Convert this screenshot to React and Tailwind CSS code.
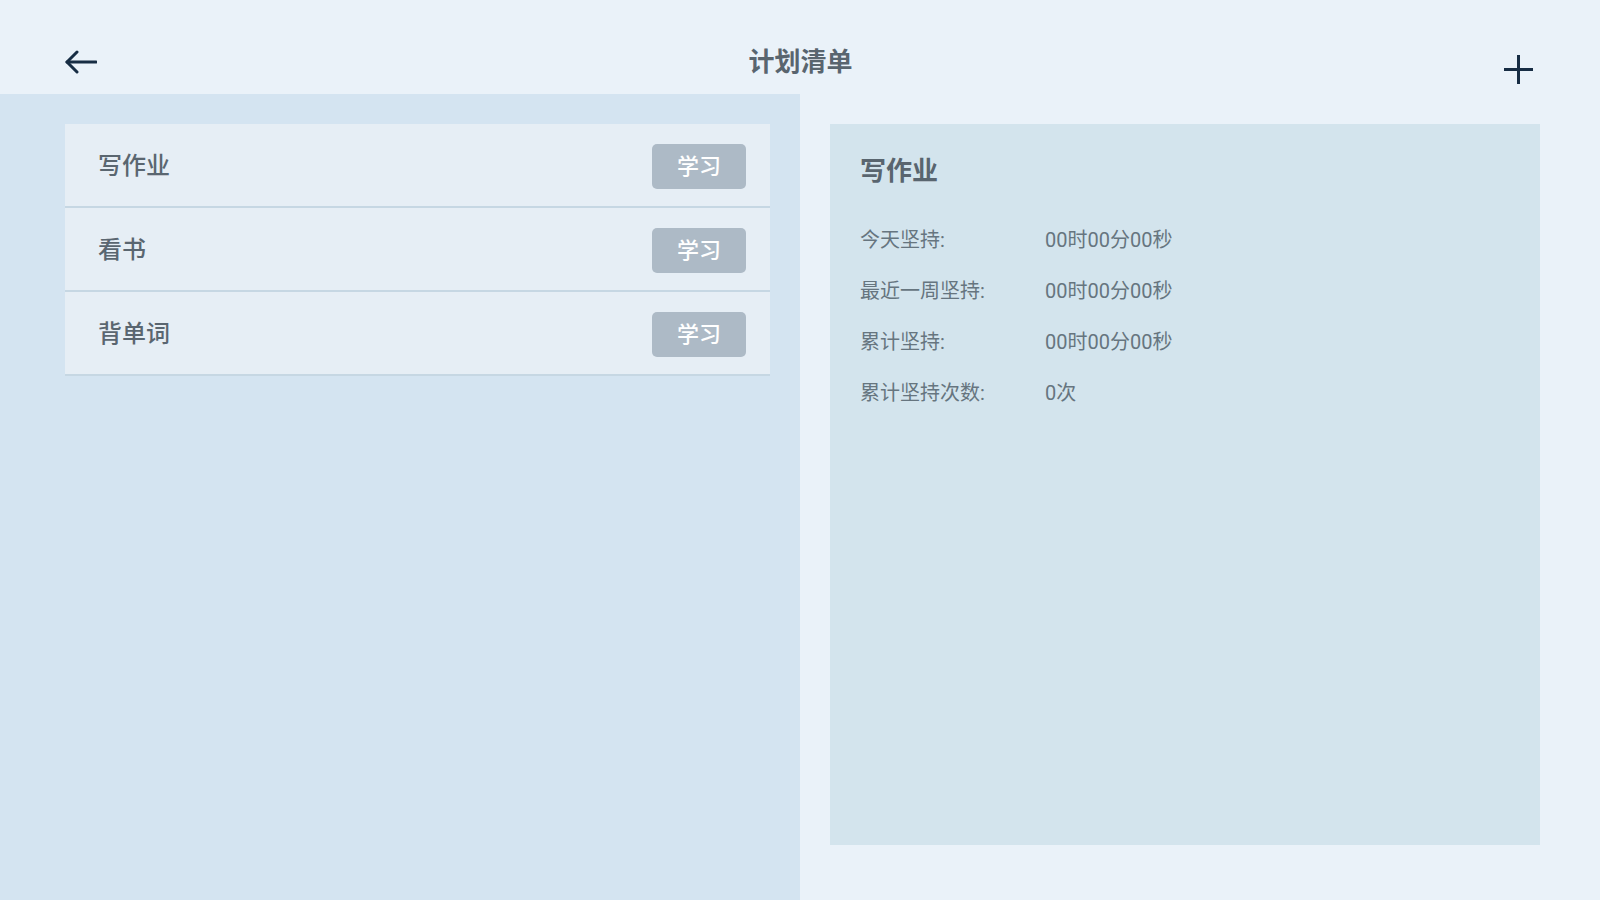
import React from 'react';

const plans = [
  { id: 1, name: '写作业', tag: '学习' },
  { id: 2, name: '看书', tag: '学习' },
  { id: 3, name: '背单词', tag: '学习' },
];

const stats = [
  { label: '今天坚持:', value: '00时00分00秒' },
  { label: '最近一周坚持:', value: '00时00分00秒' },
  { label: '累计坚持:', value: '00时00分00秒' },
  { label: '累计坚持次数:', value: '0次' },
];

const font = { fontFamily: 'Roboto, "Noto Sans CJK SC", "Noto Sans", sans-serif' };

export default function App() {
  return (
    <div className="w-[1600px] h-[900px] bg-[#eaf2f9] flex flex-col overflow-hidden" style={font}>
      {/* Header */}
      <div className="h-[94px] shrink-0 flex items-start justify-between pl-[65px] pr-[67px] pt-[50px]">
        <button type="button" className="w-[32px] h-[24px] text-[#172d44]">
          <svg width="32" height="24" viewBox="0 0 32 24" fill="none" stroke="currentColor" strokeWidth="3" strokeLinecap="round" strokeLinejoin="round">
            <path d="M31 12H2" />
            <path d="M12 2L2 12l10 10" />
          </svg>
        </button>
        <h1 className="text-[26px] font-bold text-[#59656f] leading-[26px] -mt-[1px]">计划清单</h1>
        <button type="button" className="w-[29px] h-[29px] mt-[5px] text-[#172d44]">
          <svg width="29" height="29" viewBox="0 0 29 29" fill="none" stroke="currentColor" strokeWidth="3">
            <path d="M14.5 0v29" />
            <path d="M0 14.5h29" />
          </svg>
        </button>
      </div>

      <div className="flex flex-1">
        {/* Left list */}
        <div className="w-[800px] bg-[#d4e4f1] pt-[30px] pl-[65px] pr-[30px]">
          <div className="flex flex-col">
            {plans.map((p) => (
              <div
                key={p.id}
                className="h-[84px] bg-[#e6eef5] border-b-2 border-[#c6d7e3] flex items-center justify-between pl-[33px] pr-[24px] pt-[2px]"
              >
                <span className="text-[24px] font-medium text-[#5a6670]">{p.name}</span>
                <span className="w-[94px] h-[45px] rounded-[5px] bg-[#adbac6] text-white text-[22px] font-medium flex items-center justify-center">
                  {p.tag}
                </span>
              </div>
            ))}
          </div>
        </div>

        {/* Right detail */}
        <div className="flex-1 pt-[30px] pl-[30px] pr-[60px] pb-[55px]">
          <div className="h-full bg-[#d3e4ed] pl-[30px] pt-[34px]">
            <h2 className="text-[26px] font-bold text-[#59656f] leading-none mb-[42px]">写作业</h2>
            <div className="flex flex-col gap-[23px]">
              {stats.map((s) => (
                <div key={s.label} className="flex items-center text-[20px] text-[#66757f] leading-[28px]">
                  <span className="w-[185px]">{s.label}</span>
                  <span>{s.value}</span>
                </div>
              ))}
            </div>
          </div>
        </div>
      </div>
    </div>
  );
}
